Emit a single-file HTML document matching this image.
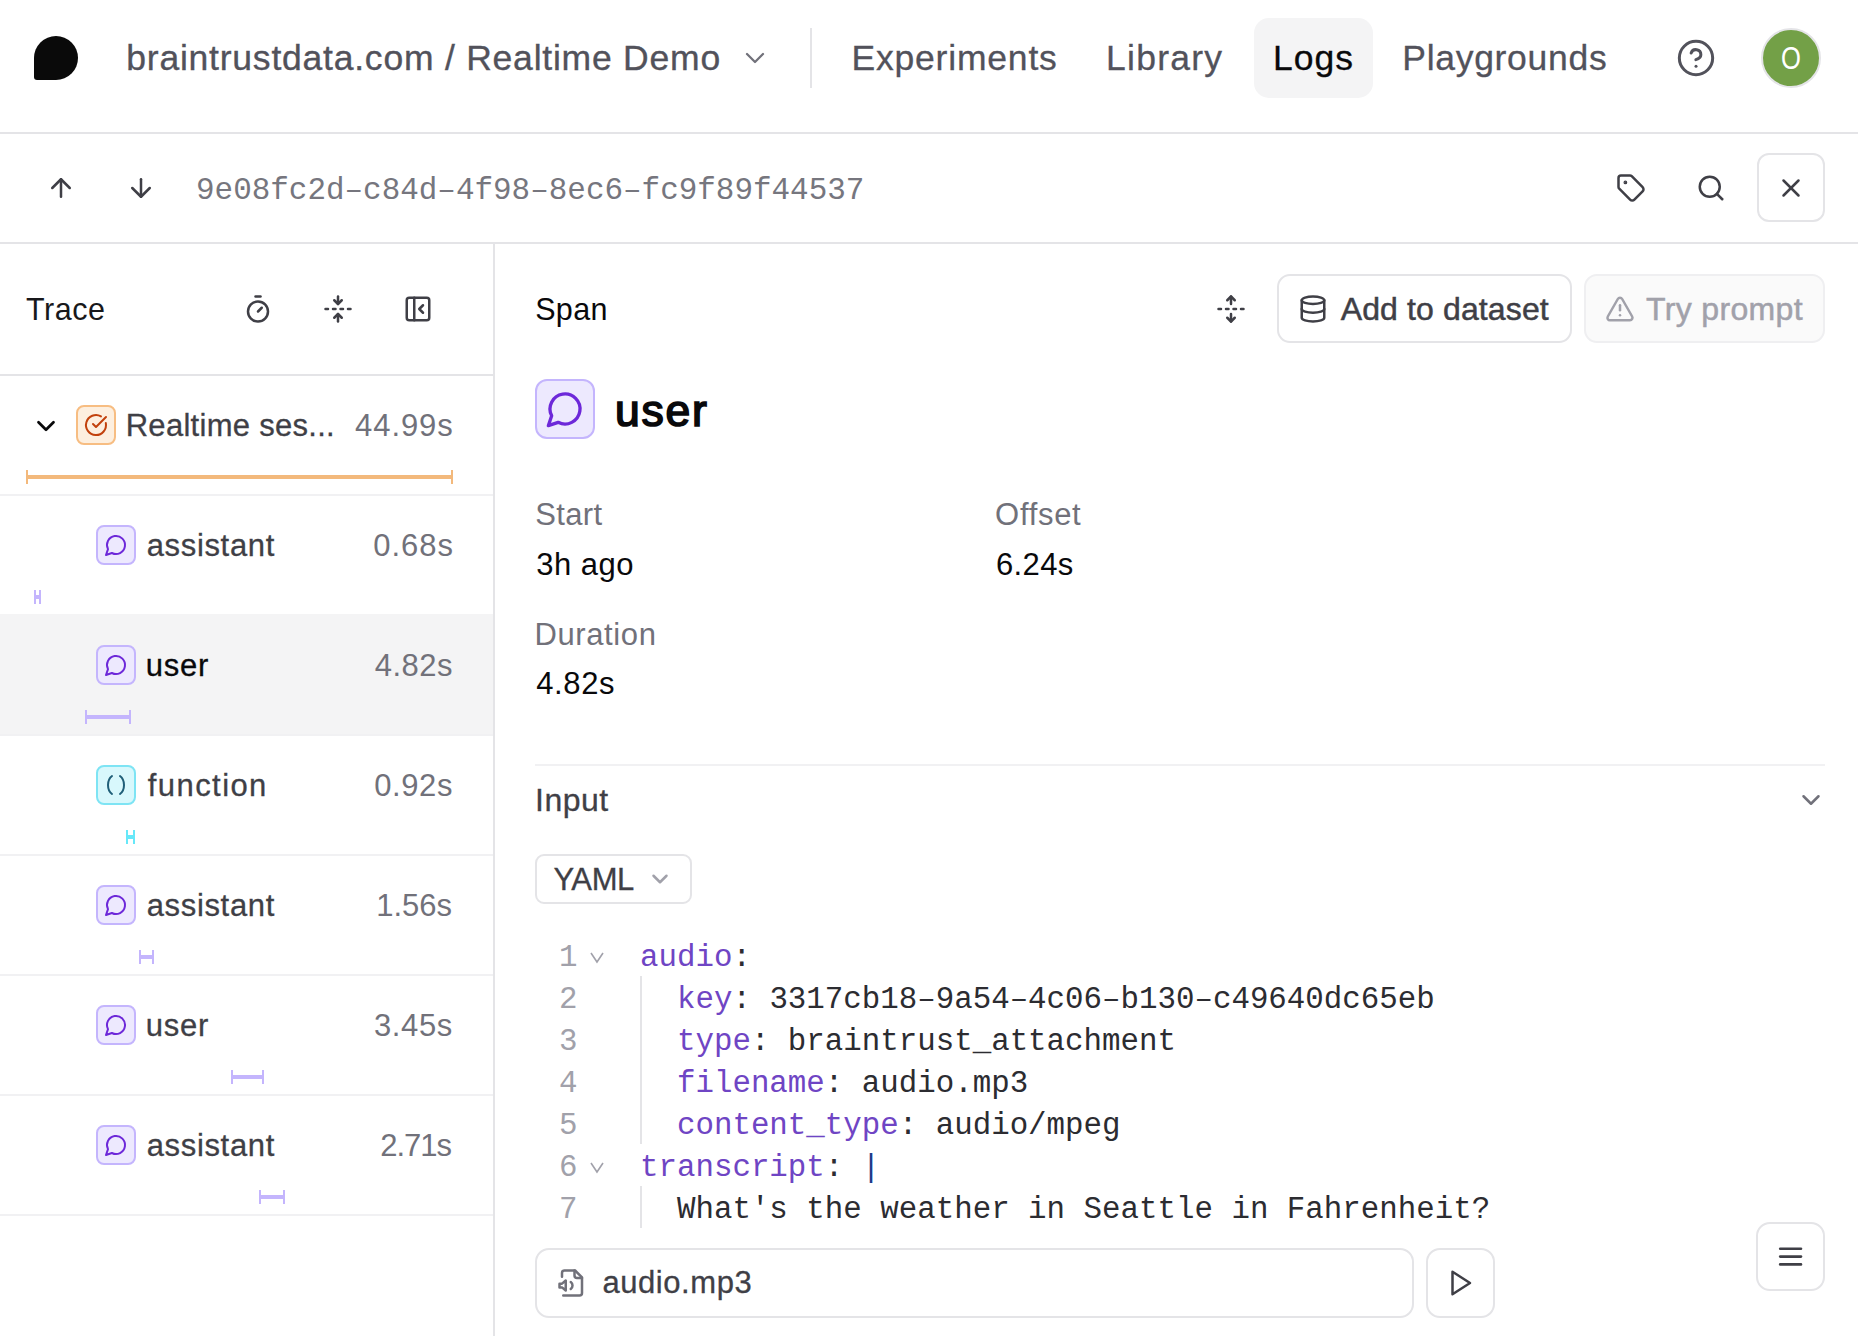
<!DOCTYPE html>
<html><head><meta charset="utf-8">
<style>
html,body{margin:0;padding:0;background:#fff;}
body{width:1858px;height:1336px;position:relative;overflow:hidden;font-family:"Liberation Sans",sans-serif;}
.a{position:absolute;}
.t{position:absolute;white-space:nowrap;line-height:1;}
.m{font-family:"Liberation Mono",monospace;}
svg.i{position:absolute;fill:none;stroke:currentColor;stroke-width:2;stroke-linecap:round;stroke-linejoin:round;overflow:visible;}
.box{position:absolute;box-sizing:border-box;border:2px solid #e4e4e7;border-radius:12px;}
.ib{position:absolute;box-sizing:border-box;width:40px;height:40px;border:2px solid #c4b5fd;background:#ede9fe;border-radius:8px;}
.bar{position:absolute;height:4px;}
.bar:before,.bar:after{content:"";position:absolute;top:-5px;width:2px;height:14px;background:inherit;}
.bar:before{left:0}.bar:after{right:0}
</style></head><body>
<svg class="a" style="left:34px;top:36px" width="44" height="44" viewBox="0 0 44 44"><path d="M0 22A22 22 0 0 1 44 22A22 22 0 0 1 22 44H3Q0 44 0 41Z" fill="#0a0a0a"/></svg>
<div class="t" style="top:41.15px;font-size:35.5px;color:#52525b;left:126.3px;letter-spacing:0.776px;-webkit-text-stroke:0.35px #52525b;">braintrustdata.com / Realtime Demo</div>
<svg class="i" style="left:739px;top:42px;color:#71717a;stroke-width:1.7;" width="32" height="32" viewBox="0 0 24 24"><path d="m6 9 6 6 6-6"/></svg>
<div class="a" style="left:810px;top:28px;width:2px;height:60px;background:#e4e4e7"></div>
<div class="t" style="top:41.15px;font-size:35.5px;color:#52525b;left:851.5px;letter-spacing:0.8px;-webkit-text-stroke:0.3px #52525b;">Experiments</div>
<div class="t" style="top:41.15px;font-size:35.5px;color:#52525b;left:1106.0px;letter-spacing:1.267px;-webkit-text-stroke:0.3px #52525b;">Library</div>
<div class="a" style="left:1254px;top:18px;width:119px;height:80px;background:#f4f4f5;border-radius:15px"></div>
<div class="t" style="top:41.15px;font-size:35.5px;color:#09090b;left:1273.0px;letter-spacing:1.0px;-webkit-text-stroke:0.3px #09090b;">Logs</div>
<div class="t" style="top:41.15px;font-size:35.5px;color:#52525b;left:1402.3px;letter-spacing:0.7px;-webkit-text-stroke:0.3px #52525b;">Playgrounds</div>
<svg class="i" style="left:1676px;top:38px;color:#52525b;stroke-width:1.8;" width="40" height="40" viewBox="0 0 24 24"><circle cx="12" cy="12" r="10"/><path d="M9.09 9a3 3 0 0 1 5.83 1c0 2-3 3-3 3"/><path d="M12 17h.01"/></svg>
<div class="a" style="left:1761px;top:28px;width:60px;height:60px;box-sizing:border-box;border:2px solid #e4e4e7;border-radius:50%;background:#73a047"></div>
<div class="t" style="left:1761px;top:38px;width:60px;text-align:center;font-size:32px;color:#fff;line-height:40px;transform:scaleX(0.8)">O</div>
<div class="a" style="left:0px;top:132px;width:1858px;height:2px;background:#e4e4e7"></div>
<svg class="i" style="left:46px;top:173px;color:#3f3f46;" width="30" height="30" viewBox="0 0 24 24"><path d="m5 12 7-7 7 7"/><path d="M12 19V5"/></svg>
<svg class="i" style="left:126px;top:173px;color:#3f3f46;" width="30" height="30" viewBox="0 0 24 24"><path d="M12 5v14"/><path d="m19 12-7 7-7-7"/></svg>
<div class="t m" style="top:176.28px;font-size:30.95px;color:#76767e;left:196.0px;">9e08fc2d&#8211;c84d&#8211;4f98&#8211;8ec6&#8211;fc9f89f44537</div>
<svg class="i" style="left:1616px;top:173px;color:#3f3f46;" width="30" height="30" viewBox="0 0 24 24"><path d="M12.586 2.586A2 2 0 0 0 11.172 2H4a2 2 0 0 0-2 2v7.172a2 2 0 0 0 .586 1.414l8.704 8.704a2.426 2.426 0 0 0 3.42 0l6.58-6.58a2.426 2.426 0 0 0 0-3.42z"/><circle cx="7.5" cy="7.5" r=".5" fill="currentColor"/></svg>
<svg class="i" style="left:1696px;top:173px;color:#3f3f46;" width="30" height="30" viewBox="0 0 24 24"><circle cx="11" cy="11" r="8"/><path d="m21 21-4.3-4.3"/></svg>
<div class="box" style="left:1757px;top:153px;width:68px;height:69px;"></div>
<svg class="i" style="left:1776px;top:173px;color:#3f3f46;" width="30" height="30" viewBox="0 0 24 24"><path d="M18 6 6 18"/><path d="m6 6 12 12"/></svg>
<div class="a" style="left:0px;top:242px;width:1858px;height:2px;background:#e4e4e7"></div>
<div class="a" style="left:493px;top:244px;width:2px;height:1092px;background:#e4e4e7"></div>
<div class="t" style="top:294.48px;font-size:30.5px;color:#18181b;left:26.1px;letter-spacing:0.525px;">Trace</div>
<svg class="i" style="left:242.5px;top:293.75px;color:#3f3f46;" width="30" height="30" viewBox="0 0 24 24"><line x1="10" x2="14" y1="2" y2="2"/><line x1="12" x2="15" y1="14" y2="11"/><circle cx="12" cy="14" r="8"/></svg>
<svg class="i" style="left:323px;top:294px;color:#3f3f46;" width="30" height="30" viewBox="0 0 24 24"><path d="M12 22v-6"/><path d="M12 8V2"/><path d="M4 12H2"/><path d="M10 12H8"/><path d="M16 12h-2"/><path d="M22 12h-2"/><path d="m15 19-3-3-3 3"/><path d="m15 5-3 3-3-3"/></svg>
<svg class="i" style="left:403px;top:293.5px;color:#3f3f46;" width="30" height="30" viewBox="0 0 24 24"><rect width="18" height="18" x="3" y="3" rx="2"/><path d="M9 3v18"/><path d="m16 15-3-3 3-3"/></svg>
<div class="a" style="left:0px;top:374px;width:493px;height:2px;background:#e4e4e7"></div>
<div class="a" style="left:76px;top:405px;width:40px;height:40px;box-sizing:border-box;border:2px solid #f7bd82;background:#fdefdf;border-radius:8px"></div>
<svg class="i" style="left:84px;top:413px;color:#c2410c;" width="24" height="24" viewBox="0 0 24 24"><path d="M21.801 10A10 10 0 1 1 17 3.335"/><path d="m9 11 3 3L22 4"/></svg>
<svg class="i" style="left:30.5px;top:410.5px;color:#09090b;stroke-width:2.2;" width="30" height="30" viewBox="0 0 24 24"><path d="m6 9 6 6 6-6"/></svg>
<div class="t" style="top:410.06px;font-size:31px;color:#3f3f46;left:125.7px;letter-spacing:0.28600000000000003px;-webkit-text-stroke:0.3px #3f3f46;">Realtime ses...</div>
<div class="t" style="top:410.06px;font-size:31px;color:#71717a;right:1404.3px;letter-spacing:0.92px;">44.99s</div>
<div class="bar" style="left:26px;top:474.5px;width:427px;background:#f3b97c"></div>
<div class="a" style="left:0px;top:494px;width:493px;height:2px;background:#f1f1f3"></div>
<div class="ib" style="left:96px;top:525px"></div>
<svg class="i" style="left:104px;top:533px;color:#6d28d9;" width="24" height="24" viewBox="0 0 24 24"><path d="M7.9 20A9 9 0 1 0 4 16.1L2 22Z"/></svg>
<div class="t" style="top:530.16px;font-size:31px;color:#3f3f46;left:146.7px;letter-spacing:0.658px;-webkit-text-stroke:0.3px #3f3f46;">assistant</div>
<div class="t" style="top:530.16px;font-size:31px;color:#71717a;right:1404.2px;letter-spacing:0.925px;">0.68s</div>
<div class="bar" style="left:34px;top:594.5px;width:7px;background:#c4b5fd"></div>
<div class="a" style="left:0px;top:614px;width:493px;height:122px;background:#f4f4f5"></div>
<div class="ib" style="left:96px;top:645px"></div>
<svg class="i" style="left:104px;top:653px;color:#6d28d9;" width="24" height="24" viewBox="0 0 24 24"><path d="M7.9 20A9 9 0 1 0 4 16.1L2 22Z"/></svg>
<div class="t" style="top:650.16px;font-size:31px;color:#09090b;left:145.8px;letter-spacing:0.7px;-webkit-text-stroke:0.3px #09090b;">user</div>
<div class="t" style="top:650.16px;font-size:31px;color:#71717a;right:1405.2px;letter-spacing:0.425px;">4.82s</div>
<div class="bar" style="left:85px;top:714.5px;width:46px;background:#c4b5fd"></div>
<div class="a" style="left:0px;top:734px;width:493px;height:2px;background:#f1f1f3"></div>
<div class="ib" style="left:96px;top:765px;border-color:#7ee4f4;background:#d8f8fc"></div>
<svg class="i" style="left:104px;top:773px;color:#1f5f78;" width="24" height="24" viewBox="0 0 24 24"><path d="M8 21s-4-3-4-9 4-9 4-9"/><path d="M16 3s4 3 4 9-4 9-4 9"/></svg>
<div class="t" style="top:770.16px;font-size:31px;color:#3f3f46;left:147.8px;letter-spacing:1.4249999999999998px;-webkit-text-stroke:0.3px #3f3f46;">function</div>
<div class="t" style="top:770.16px;font-size:31px;color:#71717a;right:1405.0px;letter-spacing:0.575px;">0.92s</div>
<div class="bar" style="left:125.7px;top:834.5px;width:9.299999999999997px;background:#67e8f9"></div>
<div class="a" style="left:0px;top:854px;width:493px;height:2px;background:#f1f1f3"></div>
<div class="ib" style="left:96px;top:885px"></div>
<svg class="i" style="left:104px;top:893px;color:#6d28d9;" width="24" height="24" viewBox="0 0 24 24"><path d="M7.9 20A9 9 0 1 0 4 16.1L2 22Z"/></svg>
<div class="t" style="top:890.16px;font-size:31px;color:#3f3f46;left:146.7px;letter-spacing:0.658px;-webkit-text-stroke:0.3px #3f3f46;">assistant</div>
<div class="t" style="top:890.16px;font-size:31px;color:#71717a;right:1406.0px;letter-spacing:-0.025000000000000022px;">1.56s</div>
<div class="bar" style="left:139.2px;top:954.5px;width:14.600000000000023px;background:#c4b5fd"></div>
<div class="a" style="left:0px;top:974px;width:493px;height:2px;background:#f1f1f3"></div>
<div class="ib" style="left:96px;top:1005px"></div>
<svg class="i" style="left:104px;top:1013px;color:#6d28d9;" width="24" height="24" viewBox="0 0 24 24"><path d="M7.9 20A9 9 0 1 0 4 16.1L2 22Z"/></svg>
<div class="t" style="top:1010.16px;font-size:31px;color:#3f3f46;left:145.8px;letter-spacing:0.7px;-webkit-text-stroke:0.3px #3f3f46;">user</div>
<div class="t" style="top:1010.16px;font-size:31px;color:#71717a;right:1405.0px;letter-spacing:0.65px;">3.45s</div>
<div class="bar" style="left:231.3px;top:1074.5px;width:32.599999999999966px;background:#c4b5fd"></div>
<div class="a" style="left:0px;top:1094px;width:493px;height:2px;background:#f1f1f3"></div>
<div class="ib" style="left:96px;top:1125px"></div>
<svg class="i" style="left:104px;top:1133px;color:#6d28d9;" width="24" height="24" viewBox="0 0 24 24"><path d="M7.9 20A9 9 0 1 0 4 16.1L2 22Z"/></svg>
<div class="t" style="top:1130.16px;font-size:31px;color:#3f3f46;left:146.7px;letter-spacing:0.658px;-webkit-text-stroke:0.3px #3f3f46;">assistant</div>
<div class="t" style="top:1130.16px;font-size:31px;color:#71717a;right:1407.0px;letter-spacing:-1.025px;">2.71s</div>
<div class="bar" style="left:259.4px;top:1194.5px;width:25.400000000000034px;background:#c4b5fd"></div>
<div class="a" style="left:0px;top:854px;width:493px;height:2px;background:#f1f1f3"></div>
<div class="a" style="left:0px;top:1214px;width:493px;height:2px;background:#f1f1f3"></div>
<div class="t" style="top:294.18px;font-size:30.5px;color:#09090b;left:535.2px;letter-spacing:0.333px;">Span</div>
<svg class="i" style="left:1216px;top:294px;color:#3f3f46;" width="30" height="30" viewBox="0 0 24 24"><path d="M12 22v-6"/><path d="M12 8V2"/><path d="M4 12H2"/><path d="M10 12H8"/><path d="M16 12h-2"/><path d="M22 12h-2"/><path d="m15 19-3 3-3-3"/><path d="m15 5-3-3-3 3"/></svg>
<div class="box" style="left:1277px;top:274px;width:295px;height:69px;border-radius:13px"></div>
<svg class="i" style="left:1297.6px;top:293.5px;color:#3f3f46;" width="30" height="30" viewBox="0 0 24 24"><ellipse cx="12" cy="5" rx="9" ry="3"/><path d="M3 5V19A9 3 0 0 0 21 19V5"/><path d="M3 12A9 3 0 0 0 21 12"/></svg>
<div class="t" style="top:292.91px;font-size:32px;color:#3f3f46;left:1340.7px;letter-spacing:0.126px;-webkit-text-stroke:0.5px #3f3f46;">Add to dataset</div>
<div class="box" style="left:1584px;top:274px;width:241px;height:69px;border-radius:13px;border-color:#efeff1;background:#fafafa"></div>
<svg class="i" style="left:1605px;top:293.5px;color:#a1a1aa;" width="30" height="30" viewBox="0 0 24 24"><path d="m21.73 18-8-14a2 2 0 0 0-3.48 0l-8 14A2 2 0 0 0 4 21h16a2 2 0 0 0 1.73-3"/><path d="M12 9v4"/><path d="M12 17h.01"/></svg>
<div class="t" style="top:292.91px;font-size:32px;color:#a1a1aa;left:1646.0px;letter-spacing:0.35px;-webkit-text-stroke:0.5px #a1a1aa;">Try prompt</div>
<div class="ib" style="left:535px;top:379px;width:60px;height:60px;border-radius:12px"></div>
<svg class="i" style="left:545px;top:389px;color:#6d28d9;" width="40" height="40" viewBox="0 0 24 24"><path d="M7.9 20A9 9 0 1 0 4 16.1L2 22Z"/></svg>
<div class="t" style="top:388.63px;font-size:44.5px;color:#09090b;left:615.0px;letter-spacing:1.731px;-webkit-text-stroke:1.7px #09090b;">user</div>
<div class="t" style="top:498.96px;font-size:31px;color:#71717a;left:535.2px;letter-spacing:0.375px;">Start</div>
<div class="t" style="top:549.06px;font-size:31px;color:#09090b;left:536.2px;letter-spacing:0.48000000000000004px;">3h ago</div>
<div class="t" style="top:498.96px;font-size:31px;color:#71717a;left:995.1px;letter-spacing:0.7px;">Offset</div>
<div class="t" style="top:549.06px;font-size:31px;color:#09090b;left:996.0px;letter-spacing:0.35px;">6.24s</div>
<div class="t" style="top:619.06px;font-size:31px;color:#71717a;left:534.5px;letter-spacing:0.603px;">Duration</div>
<div class="t" style="top:668.46px;font-size:31px;color:#09090b;left:536.2px;letter-spacing:0.65px;">4.82s</div>
<div class="a" style="left:535px;top:764px;width:1290px;height:2px;background:#f1f1f3"></div>
<div class="t" style="top:784.31px;font-size:32px;color:#3f3f46;left:535.0px;letter-spacing:0.5px;-webkit-text-stroke:0.3px #3f3f46;">Input</div>
<svg class="i" style="left:1796px;top:785px;color:#71717a;" width="30" height="30" viewBox="0 0 24 24"><path d="m6 9 6 6 6-6"/></svg>
<div class="box" style="left:535px;top:854px;width:157px;height:50px;border-radius:9px"></div>
<div class="t" style="top:863.96px;font-size:31px;color:#3f3f46;left:553.4px;letter-spacing:-0.4px;-webkit-text-stroke:0.3px #3f3f46;">YAML</div>
<svg class="i" style="left:647px;top:866px;color:#a1a1aa;stroke-width:2.3;" width="26" height="26" viewBox="0 0 24 24"><path d="m6 9 6 6 6-6"/></svg>
<div class="t m" style="top:943.39px;font-size:30.8px;color:#a1a1aa;left:559px;">1</div>
<svg class="a" style="left:589px;top:950px" width="16" height="14" viewBox="0 0 16 14"><polyline points="2,3 8,12 14,3" fill="none" stroke="#a1a1aa" stroke-width="1.6"/></svg>
<div class="t m" style="top:943.39px;font-size:30.8px;color:#2c2c31;left:640px;white-space:pre;"><span style="color:#6f45c4">audio</span>:</div>
<div class="t m" style="top:985.39px;font-size:30.8px;color:#a1a1aa;left:559px;">2</div>
<div class="t m" style="top:985.39px;font-size:30.8px;color:#2c2c31;left:640px;white-space:pre;">  <span style="color:#6f45c4">key</span>: 3317cb18&#8211;9a54&#8211;4c06&#8211;b130&#8211;c49640dc65eb</div>
<div class="t m" style="top:1027.39px;font-size:30.8px;color:#a1a1aa;left:559px;">3</div>
<div class="t m" style="top:1027.39px;font-size:30.8px;color:#2c2c31;left:640px;white-space:pre;">  <span style="color:#6f45c4">type</span>: braintrust_attachment</div>
<div class="t m" style="top:1069.39px;font-size:30.8px;color:#a1a1aa;left:559px;">4</div>
<div class="t m" style="top:1069.39px;font-size:30.8px;color:#2c2c31;left:640px;white-space:pre;">  <span style="color:#6f45c4">filename</span>: audio.mp3</div>
<div class="t m" style="top:1111.39px;font-size:30.8px;color:#a1a1aa;left:559px;">5</div>
<div class="t m" style="top:1111.39px;font-size:30.8px;color:#2c2c31;left:640px;white-space:pre;">  <span style="color:#6f45c4">content_type</span>: audio/mpeg</div>
<div class="t m" style="top:1153.39px;font-size:30.8px;color:#a1a1aa;left:559px;">6</div>
<svg class="a" style="left:589px;top:1160px" width="16" height="14" viewBox="0 0 16 14"><polyline points="2,3 8,12 14,3" fill="none" stroke="#a1a1aa" stroke-width="1.6"/></svg>
<div class="t m" style="top:1153.39px;font-size:30.8px;color:#2c2c31;left:640px;white-space:pre;"><span style="color:#6f45c4">transcript</span>: <span style="color:#1e3a8a">|</span></div>
<div class="t m" style="top:1195.39px;font-size:30.8px;color:#a1a1aa;left:559px;">7</div>
<div class="t m" style="top:1195.39px;font-size:30.8px;color:#2c2c31;left:640px;white-space:pre;">  What's the weather in Seattle in Fahrenheit?</div>
<div class="a" style="left:640px;top:976px;width:2px;height:168px;background:#e4e4e7"></div>
<div class="a" style="left:640px;top:1186px;width:2px;height:42px;background:#e4e4e7"></div>
<div class="box" style="left:535px;top:1248px;width:879px;height:70px;border-radius:14px;background:#fff"></div>
<svg class="i" style="left:556.5px;top:1268px;color:#71717a;" width="30" height="30" viewBox="0 0 24 24"><path d="M4 7V4a2 2 0 0 1 2-2h8.5L20 7.5V20a2 2 0 0 1-2 2H5"/><path d="M14 2v4a2 2 0 0 0 2 2h4"/><path d="M2 12.5h2l3-2.5v8l-3-2.5H2z"/><path d="M11 11.2a3.5 3.5 0 0 1 0 5.6"/></svg>
<div class="t" style="top:1267.46px;font-size:31px;color:#3f3f46;left:602.4px;letter-spacing:0.575px;-webkit-text-stroke:0.3px #3f3f46;">audio.mp3</div>
<div class="box" style="left:1426px;top:1248px;width:69px;height:70px;border-radius:14px"></div>
<svg class="i" style="left:1444.75px;top:1268px;color:#3f3f46;" width="30" height="30" viewBox="0 0 24 24"><polygon points="6 3 20 12 6 21 6 3"/></svg>
<div class="box" style="left:1756px;top:1222px;width:69px;height:69px;border-radius:14px;background:#fff"></div>
<svg class="i" style="left:1775.4px;top:1241.4px;color:#3f3f46;" width="31.2" height="31.2" viewBox="0 0 24 24"><path d="M4 12h16"/><path d="M4 6h16"/><path d="M4 18h16"/></svg>
</body></html>
